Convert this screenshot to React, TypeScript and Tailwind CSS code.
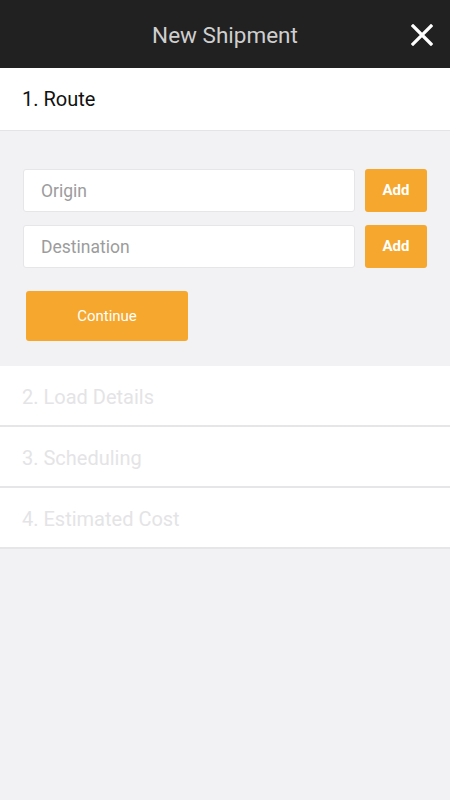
const steps = ["2. Load Details", "3. Scheduling", "4. Estimated Cost"];

const App = () => {
  return (
    <div className="min-h-[800px] w-[450px] bg-[#f2f2f4] font-['Roboto',sans-serif]">
      <header className="relative flex h-[68px] items-center justify-center bg-[#212121]">
        <h1 className="pt-[4px] text-[22.5px] text-[#cfcfcf]">New Shipment</h1>
        <button className="absolute right-[17px] top-[24px] h-[22px] w-[22px]">
          <svg viewBox="0 0 22 22" className="h-[22px] w-[22px]">
            <path d="M2 2 L20 20 M20 2 L2 20" stroke="#ffffff" strokeWidth="3.2" strokeLinecap="square" />
          </svg>
        </button>
      </header>

      <div className="flex h-[63px] items-center border-b border-[#e4e4e6] bg-white px-[22px]">
        <span className="text-[20px] text-[#111]">1. Route</span>
      </div>

      <div className="px-[23px] pb-[25px] pt-[38px]">
        <div className="flex flex-col gap-[13px]">
          {["Origin", "Destination"].map((label) => (
            <div key={label} className="flex gap-[10px]">
              <input
                type="text"
                placeholder={label}
                className="h-[43px] flex-1 rounded-[3px] border border-[#e6e6e8] bg-white px-[17px] text-[17.5px] text-[#333] placeholder:text-[#9c9c9c] focus:outline-none"
              />
              <button className="h-[43px] w-[62px] rounded-[3px] bg-[#f6a72d] text-[15px] font-bold text-white">Add</button>
            </div>
          ))}
        </div>
        <button className="ml-[3px] mt-[23px] h-[50px] w-[162px] rounded-[3px] bg-[#f6a72d] text-[15px] text-white">
          Continue
        </button>
      </div>

      <div>
        {steps.map((step) => (
          <div key={step} className="flex h-[61px] items-center border-b-2 border-[#e6e6e8] bg-white px-[22px]">
            <span className="pt-[2px] text-[20px] text-[#e4e4e6]">{step}</span>
          </div>
        ))}
      </div>
    </div>
  );
};

export default App;
